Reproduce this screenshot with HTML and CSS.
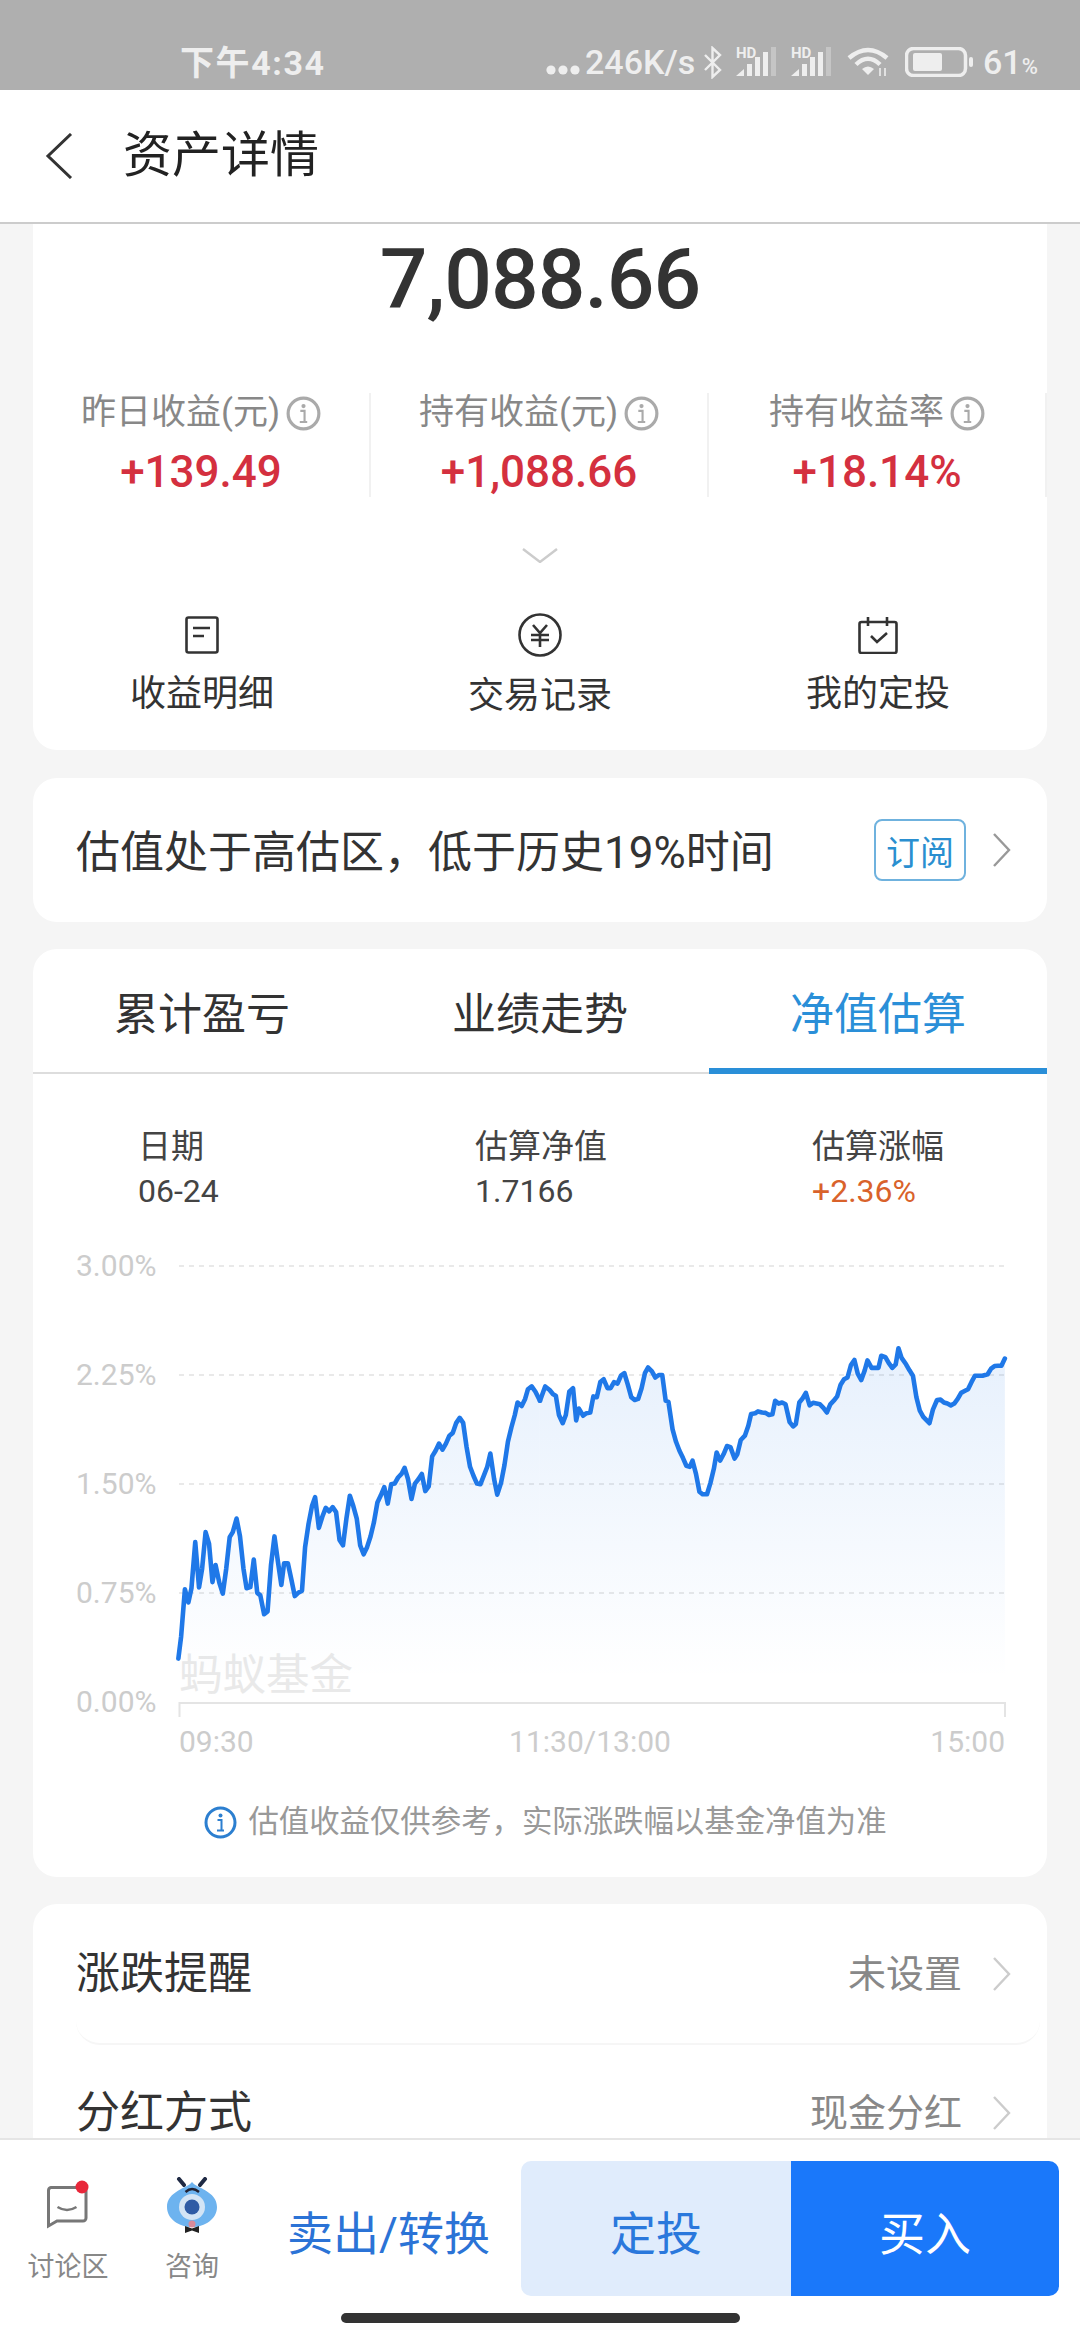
FILE: index.html
```html
<!DOCTYPE html>
<html lang="zh-CN">
<head>
<meta charset="utf-8">
<title>资产详情</title>
<link rel="stylesheet" href="styles.css">
</head>
<body>
<svg class="defs" width="0" height="0" aria-hidden="true">
  <symbol id="info" viewBox="0 0 33 33">
    <circle cx="16.5" cy="16.5" r="14.5" fill="none" stroke="currentColor" stroke-width="3"/>
    <circle cx="16.5" cy="9.5" r="2" fill="currentColor"/>
    <path d="M13.5 14h4v10M13 24.5h7" fill="none" stroke="currentColor" stroke-width="2"/>
  </symbol>
  <symbol id="chev" viewBox="0 0 19 34">
    <polyline points="2,1 17,17 2,33" fill="none" stroke="currentColor" stroke-width="2.4"/>
  </symbol>
  <symbol id="bars" viewBox="0 0 40 30">
    <path d="M0 29L8 22V29Z M11 17H16V29H11Z M19 10H24V29H19Z M27 5H32V29H27Z" fill="#eee"/>
    <rect x="35" y="0" width="5" height="29" fill="#eee" opacity=".35"/>
  </symbol>
</svg>
<div class="screen">
  <div class="statusbar">
    <span class="time">下午4:34</span>
    <svg class="sb-dots" width="34" height="10" viewBox="0 0 34 10"><circle cx="5" cy="5" r="4.6"/><circle cx="17" cy="5" r="4.6"/><circle cx="29" cy="5" r="4.6"/></svg>
    <span class="speed">246K/s</span>
    <svg class="sb-bt" width="21" height="33" viewBox="0 0 21 33"><polyline points="3,9 18,24 10.5,31 10.5,2 18,9 3,24"/></svg>
    <svg class="sb-sig1" width="40" height="36" viewBox="0 -6 40 36"><text x="0" y="11" class="hd">HD</text><use href="#bars" width="40" height="30"/></svg>
    <svg class="sb-sig2" width="40" height="36" viewBox="0 -6 40 36"><text x="0" y="11" class="hd">HD</text><use href="#bars" width="40" height="30"/></svg>
    <svg class="sb-wifi" width="42" height="30" viewBox="0 0 42 30">
      <path d="M2 11Q21 -5 40 11M9 17.500Q21 6 33 17.500" fill="none" stroke="#eee" stroke-width="4.500"/>
      <path d="M15 22Q21 17 27 22L21 28Z" fill="#eee"/>
      <path d="M33 21V29M38 21V29" stroke="#eee" stroke-width="1.600"/>
    </svg>
    <svg class="sb-batt" width="68" height="30" viewBox="0 0 68 30">
      <rect x="1.5" y="1.5" width="59" height="27" rx="7" fill="none" stroke="#eee" stroke-width="3.5"/>
      <rect x="8" y="6" width="29" height="18" rx="2" fill="#eee"/>
      <rect x="64" y="10" width="4" height="10" rx="2" fill="#eee"/>
    </svg>
    <span class="pct">61<small>%</small></span>
  </div>

  <header class="nav">
    <svg class="nav-back" width="28" height="46" viewBox="0 0 28 46"><polyline points="26,1 3,23 26,45"/></svg>
    <h1 class="nav-title">资产详情</h1>
  </header>

  <main class="scroll">
    <section class="card card-summary">
      <div class="amount">7,088.66</div>
      <div class="stats">
        <div class="stat">
          <div class="stat-label">昨日收益(元)<svg class="stat-info" width="35" height="35"><use href="#info"/></svg></div>
          <div class="stat-value">+139.49</div>
        </div>
        <div class="stat">
          <div class="stat-label">持有收益(元)<svg class="stat-info" width="35" height="35"><use href="#info"/></svg></div>
          <div class="stat-value">+1,088.66</div>
        </div>
        <div class="stat">
          <div class="stat-label">持有收益率<svg class="stat-info" width="35" height="35"><use href="#info"/></svg></div>
          <div class="stat-value">+18.14%</div>
        </div>
      </div>
      <svg class="expand" width="36" height="15" viewBox="0 0 36 15"><polyline points="1,1 18,14 35,1"/></svg>
      <div class="actions">
        <div class="action">
          <div class="action-icon">
            <svg width="34" height="38" viewBox="0 0 34 38"><rect x="1.5" y="1.5" width="31" height="35" rx="2"/><path d="M8 12H25M8 20H19"/></svg>
          </div>
          <div class="action-label">收益明细</div>
        </div>
        <div class="action">
          <div class="action-icon">
            <svg width="44" height="44" viewBox="0 0 44 44"><circle cx="22" cy="22" r="20.5"/><path d="M15 12L22 20L29 12M13 22H31M13 27H31M22 20V34"/></svg>
          </div>
          <div class="action-label action-label-low">交易记录</div>
        </div>
        <div class="action">
          <div class="action-icon">
            <svg width="40" height="38" viewBox="0 0 40 38"><rect x="1.5" y="6" width="37" height="31" rx="2"/><path d="M10 1V10M29 1V10M13 20L19 26L29 17"/></svg>
          </div>
          <div class="action-label">我的定投</div>
        </div>
      </div>
    </section>

    <section class="card card-valuation">
      <div class="valuation-text">估值处于高估区，低于历史19%时间</div>
      <div class="subscribe">订阅</div>
      <svg class="chev chev-dark" width="19" height="34"><use href="#chev"/></svg>
    </section>

    <section class="card card-chart">
      <div class="tabs">
        <div class="tab">累计盈亏</div>
        <div class="tab">业绩走势</div>
        <div class="tab tab-active">净值估算</div>
      </div>
      <div class="metrics">
        <div class="metric">
          <div class="metric-label">日期</div>
          <div class="metric-value">06-24</div>
        </div>
        <div class="metric">
          <div class="metric-label">估算净值</div>
          <div class="metric-value">1.7166</div>
        </div>
        <div class="metric">
          <div class="metric-label">估算涨幅</div>
          <div class="metric-value metric-up">+2.36%</div>
        </div>
      </div>
      <svg class="chart" width="1014" height="560" viewBox="33 1212 1014 560">
        <defs>
          <linearGradient id="areaFill" gradientUnits="userSpaceOnUse" x1="0" y1="300" x2="0" y2="1230">
            <stop offset="0" stop-color="#1f78e8" stop-opacity=".11"/>
            <stop offset="1" stop-color="#1f78e8" stop-opacity="0"/>
          </linearGradient>
        </defs>
        <g class="grid">
          <line x1="179" y1="1266" x2="1005" y2="1266"/>
          <line x1="179" y1="1375" x2="1005" y2="1375"/>
          <line x1="179" y1="1484" x2="1005" y2="1484"/>
          <line x1="179" y1="1593" x2="1005" y2="1593"/>
        </g>
        <path class="axis" d="M179.5 1717V1703H1005V1717"/>
        <g class="tick-labels">
          <text x="76" y="1276">3.00%</text>
          <text x="76" y="1385">2.25%</text>
          <text x="76" y="1494">1.50%</text>
          <text x="76" y="1603">0.75%</text>
          <text x="76" y="1712">0.00%</text>
          <text x="179" y="1752">09:30</text>
          <text x="590" y="1752" text-anchor="middle">11:30/13:00</text>
          <text x="1005" y="1752" text-anchor="end">15:00</text>
        </g>
        <text class="watermark" x="179" y="1690">蚂蚁基金</text>
        <g transform="translate(0 1240) scale(.34435 .35714)">
          <polygon class="area" points="518,1172 526,1110 537,978 547,1015 556,975 567,846 578,973 587,920 597,818 607,850 617,958 626,910 637,960 647,990 657,920 667,832 676,818 687,780 697,830 707,920 716,975 727,972 737,895 747,988 756,995 767,1048 777,1040 787,910 797,830 807,900 817,966 825,905 836,905 846,950 856,997 866,988 877,982 886,860 896,795 906,745 915,720 926,806 936,775 946,750 956,760 966,748 976,762 986,840 996,855 1006,780 1016,716 1026,745 1036,780 1046,855 1056,880 1066,860 1076,830 1086,790 1096,735 1106,715 1116,692 1126,738 1136,684 1146,682 1156,665 1166,655 1175,638 1185,670 1195,725 1205,682 1215,670 1225,655 1235,703 1245,690 1255,606 1265,590 1275,570 1285,587 1295,570 1305,548 1315,540 1325,512 1335,498 1345,512 1355,580 1365,635 1375,660 1385,682 1395,684 1405,660 1415,635 1424,598 1435,670 1444,713 1455,680 1465,630 1475,565 1485,525 1495,490 1503,455 1515,465 1525,445 1533,418 1544,410 1555,425 1568,450 1568,1295 518,1295"/>
          <polyline class="line" points="518,1172 526,1110 537,978 547,1015 556,975 567,846 578,973 587,920 597,818 607,850 617,958 626,910 637,960 647,990 657,920 667,832 676,818 687,780 697,830 707,920 716,975 727,972 737,895 747,988 756,995 767,1048 777,1040 787,910 797,830 807,900 817,966 825,905 836,905 846,950 856,997 866,988 877,982 886,860 896,795 906,745 915,720 926,806 936,775 946,750 956,760 966,748 976,762 986,840 996,855 1006,780 1016,716 1026,745 1036,780 1046,855 1056,880 1066,860 1076,830 1086,790 1096,735 1106,715 1116,692 1126,738 1136,684 1146,682 1156,665 1166,655 1175,638 1185,670 1195,725 1205,682 1215,670 1225,655 1235,703 1245,690 1255,606 1265,590 1275,570 1285,587 1295,570 1305,548 1315,540 1325,512 1335,498 1345,512 1355,580 1365,635 1375,660 1385,682 1395,684 1405,660 1415,635 1424,598 1435,670 1444,713 1455,680 1465,630 1475,565 1485,525 1495,490 1503,455 1515,465 1525,445 1533,418 1544,410 1555,425 1568,450"/>
        </g>
        <g transform="translate(540 1240) scale(.34435 .35714)">
          <polygon class="area" points="0,450 15,410 28,420 38,432 46,436 55,490 66,513 75,490 85,425 96,415 105,505 113,472 125,492 135,485 146,483 155,438 165,440 175,398 185,390 196,415 205,415 215,398 225,402 235,380 245,373 255,405 265,440 275,448 285,445 295,415 305,372 314,357 325,368 335,385 345,378 355,378 365,450 373,453 385,530 395,565 405,590 415,610 425,632 435,635 443,618 453,655 463,705 472,712 485,712 495,680 505,640 513,595 523,618 533,600 543,577 553,580 565,612 573,600 583,560 595,548 605,520 613,487 625,485 633,480 645,483 655,484 665,490 675,488 683,450 693,458 703,455 713,460 725,510 735,522 743,515 753,455 763,443 772,428 783,463 793,456 803,458 813,460 823,470 833,483 843,460 853,450 863,438 873,405 883,390 893,385 903,350 913,336 923,375 933,392 943,365 951,337 963,358 973,358 983,358 991,324 1003,328 1013,345 1023,358 1033,348 1041,303 1050,330 1063,348 1073,365 1083,380 1093,440 1103,478 1113,495 1123,505 1131,513 1141,475 1153,448 1163,447 1173,455 1183,458 1193,463 1203,458 1213,445 1223,428 1233,423 1243,418 1253,398 1263,380 1275,380 1285,380 1300,376 1310,360 1320,353 1330,352 1340,352 1350,332 1350,1295 0,1295"/>
          <polyline class="line" points="0,450 15,410 28,420 38,432 46,436 55,490 66,513 75,490 85,425 96,415 105,505 113,472 125,492 135,485 146,483 155,438 165,440 175,398 185,390 196,415 205,415 215,398 225,402 235,380 245,373 255,405 265,440 275,448 285,445 295,415 305,372 314,357 325,368 335,385 345,378 355,378 365,450 373,453 385,530 395,565 405,590 415,610 425,632 435,635 443,618 453,655 463,705 472,712 485,712 495,680 505,640 513,595 523,618 533,600 543,577 553,580 565,612 573,600 583,560 595,548 605,520 613,487 625,485 633,480 645,483 655,484 665,490 675,488 683,450 693,458 703,455 713,460 725,510 735,522 743,515 753,455 763,443 772,428 783,463 793,456 803,458 813,460 823,470 833,483 843,460 853,450 863,438 873,405 883,390 893,385 903,350 913,336 923,375 933,392 943,365 951,337 963,358 973,358 983,358 991,324 1003,328 1013,345 1023,358 1033,348 1041,303 1050,330 1063,348 1073,365 1083,380 1093,440 1103,478 1113,495 1123,505 1131,513 1141,475 1153,448 1163,447 1173,455 1183,458 1193,463 1203,458 1213,445 1223,428 1233,423 1243,418 1253,398 1263,380 1275,380 1285,380 1300,376 1310,360 1320,353 1330,352 1340,352 1350,332"/>
        </g>
      </svg>
      <div class="disclaimer">
        <svg class="disclaimer-icon" width="33" height="33"><use href="#info"/></svg>
        <span>估值收益仅供参考，实际涨跌幅以基金净值为准</span>
      </div>
    </section>

    <section class="card card-settings">
      <div class="setting setting-first">
        <span class="setting-name">涨跌提醒</span>
        <span class="setting-value">未设置</span>
        <svg class="chev chev-light" width="19" height="34"><use href="#chev"/></svg>
      </div>
      <div class="setting">
        <span class="setting-name">分红方式</span>
        <span class="setting-value">现金分红</span>
        <svg class="chev chev-light" width="19" height="34"><use href="#chev"/></svg>
      </div>
    </section>
  </main>

  <footer class="bottom">
    <div class="bottom-row">
      <div class="tool tool-talk">
        <svg width="42" height="56" viewBox="0 0 42 56">
          <path d="M4 10.5H36a3 3 0 0 1 3 3V41a3 3 0 0 1-3 3H10L1.5 49V13.5a3 3 0 0 1 2.5-3Z" fill="none" stroke="#777" stroke-width="3"/>
          <path d="M10.5 30Q20 36 29.5 30" fill="none" stroke="#777" stroke-width="2.4"/>
          <circle cx="35" cy="10" r="6.5" fill="#e8273a"/>
        </svg>
        <div class="tool-label">讨论区</div>
      </div>
      <div class="tool tool-ask">
        <svg width="50" height="56" viewBox="0 0 50 56">
          <path d="M25 5C29 11 50 14 50 30C50 42 38 50 25 50C12 50 0 42 0 30C0 14 21 11 25 5Z" fill="#6db3ef"/>
          <path d="M12 2L17 8M38 2L33 8" stroke="#1f2a44" stroke-width="4" stroke-linecap="round"/>
          <path d="M18.500 15Q25 9 32 15" fill="none" stroke="#223" stroke-width="2.4"/>
          <circle cx="25" cy="30" r="13" fill="#d3e4f5"/>
          <circle cx="25" cy="30" r="7.500" fill="#2f5ba5"/>
          <circle cx="25" cy="47" r="3.500" fill="#d98a9a"/>
          <path d="M18 49L25 51.500L32 49V56L25 53.500L18 56Z" fill="#222"/>
        </svg>
        <div class="tool-label">咨询</div>
      </div>
      <div class="sell">卖出/转换</div>
      <div class="btn btn-plan">定投</div>
      <div class="btn btn-buy">买入</div>
    </div>
    <div class="home"></div>
  </footer>
</div>
</body>
</html>
```
FILE: styles.css
```css
* { box-sizing: border-box; }
html, body { margin: 0; padding: 0; }
body {
  width: 1080px;
  height: 2340px;
  overflow: hidden;
  font-family: Roboto, "Noto Sans CJK SC", sans-serif;
  color: #333;
  background: #f5f5f5;
}
.defs { display: block; height: 0; }
.hd { font: 700 15px Roboto, sans-serif; fill: #eee; }
.screen { width: 1080px; height: 2340px; display: flex; flex-direction: column; }

/* status bar */
.statusbar {
  height: 90px;
  flex: none;
  background: #afafaf;
  display: flex;
  align-items: center;
  padding: 34px 0 0 180px;
  color: #eee;
  font-weight: 500;
  font-size: 34px;
}
.time { letter-spacing: 1.6px; width: 146px; white-space: nowrap; font-weight: 700; margin-bottom: 4px; }
.sb-dots { margin-left: 220px; margin-top: 16px; fill: #eee; }
.speed { margin-left: 5px; width: 109px; white-space: nowrap; }
.sb-bt { margin-left: 8px; fill: none; stroke: #eee; stroke-width: 2.4; }
.sb-sig1 { margin-left: 13px; margin-top: -6px; }
.sb-sig2 { margin-left: 15px; margin-top: -6px; }
.sb-wifi { margin-left: 16px; }
.sb-batt { margin-left: 16px; }
.pct { margin-left: 10px; white-space: nowrap; }
.pct small { font-size: 22px; }

/* nav */
.nav {
  height: 134px;
  flex: none;
  background: #fff;
  border-bottom: 2px solid #ccc;
  display: flex;
  align-items: center;
  padding-left: 45px;
}
.nav-back { fill: none; stroke: #333; stroke-width: 3; }
.nav-title { margin: 0 0 0 50px; font-size: 49px; font-weight: 400; line-height: 60px; color: #222; }

/* scroll area */
.scroll { flex: 1; min-height: 0; overflow: hidden; padding: 0 33px; }
.card { background: #fff; border-radius: 24px; width: 1014px; }

/* summary card */
.card-summary {
  height: 526px;
  border-radius: 0 0 24px 24px;
  padding-top: 6px;
  display: flex;
  flex-direction: column;
}
.amount {
  font-size: 84px;
  font-weight: 500;
  line-height: 100px;
  text-align: center;
  color: #333;
  letter-spacing: -1px;
}
.stats { display: grid; grid-template-columns: repeat(3, 1fr); height: 100px; margin-top: 63px; flex: none; }
.stat { border-right: 2px solid #f1f1f1; text-align: center; }
.stat-label {
  display: flex;
  align-items: center;
  justify-content: center;
  font-size: 35px;
  line-height: 40px;
  color: #888;
}
.stat-info { margin-left: 6px; color: #aaa; }
.stat-value { font-size: 44px; font-weight: 500; line-height: 50px; margin-top: 14px; color: #d4303f; }
.expand { margin: 55px auto 0; flex: none; fill: none; stroke: #ccc; stroke-width: 2.4; display: block; }
.actions { display: grid; grid-template-columns: repeat(3, 1fr); margin-top: 50px; }
.action { text-align: center; }
.action-icon { height: 44px; display: flex; align-items: center; justify-content: center; }
.action-icon svg { fill: none; stroke: #333; stroke-width: 2.6; }
.action-label { font-size: 36px; line-height: 40px; margin-top: 17px; color: #333; }
.action-label-low { margin-top: 19px; }

/* valuation card */
.card-valuation {
  margin-top: 28px;
  height: 144px;
  display: flex;
  align-items: center;
  padding: 0 36px 0 43px;
}
.valuation-text { font-size: 44px; line-height: 60px; color: #333; white-space: nowrap; margin-top: 6px; }
.subscribe {
  margin-left: auto;
  width: 92px;
  height: 62px;
  border: 2px solid #6fb2de;
  border-radius: 8px;
  display: flex;
  align-items: center;
  justify-content: center;
  font-size: 34px;
  color: #2a8fd0;
}
.chev { flex: none; }
.card-valuation .chev { margin-left: 26px; }
.chev-dark { color: #999; }
.chev-light { color: #ccc; }

/* chart card */
.card-chart { margin-top: 27px; height: 928px; }
.tabs { display: grid; grid-template-columns: repeat(3, 1fr); height: 125px; border-bottom: 2px solid #ddd; }
.tab { position: relative; display: flex; align-items: center; justify-content: center; font-size: 44px; color: #333; }
.tab-active { color: #2a8fd8; }
.tab-active::after {
  content: "";
  position: absolute;
  left: 0;
  right: 0;
  bottom: -2px;
  height: 6px;
  background: #2a8fd8;
}
.metrics { display: grid; grid-template-columns: repeat(3, 337px); padding: 51px 0 0 105px; height: 138px; }
.metric-label { font-size: 33px; line-height: 44px; color: #444; }
.metric-value { font-size: 32px; line-height: 40px; margin-top: 2px; color: #444; }
.metric-up { color: #d9622b; }
.chart { display: block; }
.grid line { stroke: #e2e2e2; stroke-width: 1.5; stroke-dasharray: 5 5; }
.axis { fill: none; stroke: #e4e4e4; stroke-width: 2; }
.tick-labels text { font: 400 30px Roboto, sans-serif; fill: #ccc; }
.watermark { font: 400 43.5px "Noto Sans CJK SC", sans-serif; fill: #e9e9e9; }
.area { fill: url(#areaFill); }
.line {
  fill: none;
  stroke: #1f78e8;
  stroke-width: 4.6;
  stroke-linejoin: round;
  stroke-linecap: round;
  vector-effect: non-scaling-stroke;
}
.disclaimer {
  margin-top: 28px;
  padding-left: 11px;
  display: flex;
  align-items: center;
  justify-content: center;
  font-size: 30.4px;
  line-height: 44px;
  color: #999;
}
.disclaimer-icon { color: #2c7fd0; margin-right: 11px; flex: none; }

/* settings card */
.card-settings { margin-top: 27px; }
.setting {
  display: flex;
  align-items: center;
  height: 136px;
  margin-left: 43px;
  margin-right: 7px;
  padding-right: 29px;
}
.setting-first { height: 141px; border-bottom: 2px solid #f6f6f6; border-radius: 0 0 24px 24px; }
.setting-name { font-size: 44px; line-height: 48px; color: #333; margin-right: auto; }
.setting-value { font-size: 38px; line-height: 48px; color: #888; margin-right: 30px; }

/* bottom bar */
.bottom { height: 202px; flex: none; background: #fff; border-top: 2px solid #e5e5e5; padding-top: 21px; }
.bottom-row { display: flex; height: 135px; padding-right: 21px; }
.tool { margin-top: 16px; text-align: center; }
.tool svg { display: block; margin: 0 auto; }
.tool-talk { width: 82px; margin-left: 27px; }
.tool-ask { width: 56px; margin-left: 55px; }
.tool-label { font-size: 27px; line-height: 34px; margin-top: 17px; color: #888; white-space: nowrap; }
.sell { margin-left: 67px; width: 234px; font-size: 46px; color: #2b73d6; display: flex; align-items: center; padding-top: 3px; white-space: nowrap; }
.btn { display: flex; align-items: center; justify-content: center; font-size: 46px; padding-top: 3px; }
.btn-plan { width: 270px; background: #e0ecfc; color: #2a78dc; border-radius: 10px 0 0 10px; }
.btn-buy { width: 268px; background: #1a78fa; color: #fff; border-radius: 0 10px 10px 0; }
.home { width: 399px; height: 10px; margin: 17px auto 0; background: #333; border-radius: 5px; }
```
